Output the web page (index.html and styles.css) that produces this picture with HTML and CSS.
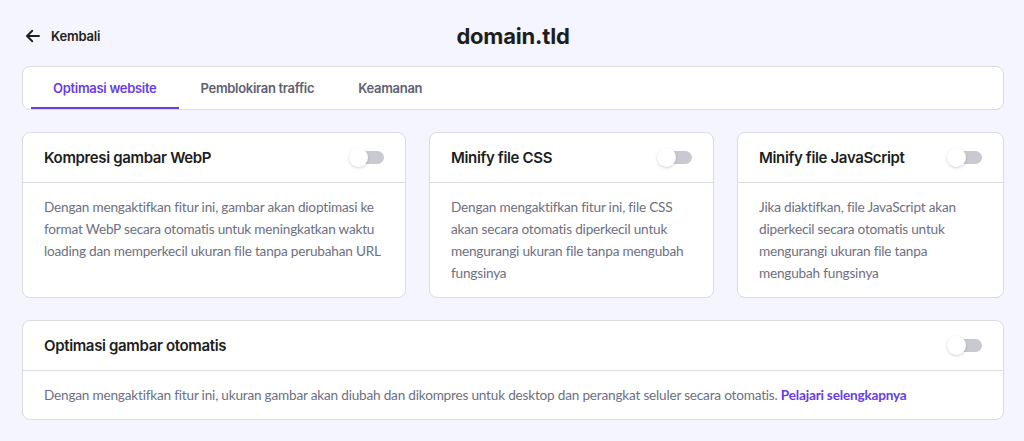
FILE: index.html
```html
<!DOCTYPE html>
<html lang="id">
<head>
<meta charset="utf-8">
<title>domain.tld</title>
<link rel="stylesheet" href="styles.css">
</head>
<body>
<div class="page">
  <header class="topbar">
    <a class="back" href="#">
      <svg class="back-icon" width="18" height="18" viewBox="0 0 24 24" fill="none" stroke="#1d1e20" stroke-width="2.4" stroke-linecap="round" stroke-linejoin="round"><path d="M20 12H4.5"/><path d="M11 5l-7 7 7 7"/></svg>
      <span>Kembali</span>
    </a>
    <h1 class="title">domain.tld</h1>
  </header>

  <nav class="tabs">
    <a class="tab active" href="#">Optimasi website</a>
    <a class="tab" href="#">Pemblokiran traffic</a>
    <a class="tab" href="#">Keamanan</a>
  </nav>

  <section class="grid">
    <div class="card">
      <div class="card-head">
        <h2 class="card-title">Kompresi gambar WebP</h2>
        <span class="toggle"><span class="knob"></span></span>
      </div>
      <p class="card-body">Dengan mengaktifkan fitur ini, gambar akan dioptimasi ke format WebP secara otomatis untuk meningkatkan waktu loading dan memperkecil ukuran file tanpa perubahan URL</p>
    </div>
    <div class="card">
      <div class="card-head">
        <h2 class="card-title">Minify file CSS</h2>
        <span class="toggle"><span class="knob"></span></span>
      </div>
      <p class="card-body">Dengan mengaktifkan fitur ini, file CSS akan secara otomatis diperkecil untuk mengurangi ukuran file tanpa mengubah fungsinya</p>
    </div>
    <div class="card">
      <div class="card-head">
        <h2 class="card-title">Minify file JavaScript</h2>
        <span class="toggle"><span class="knob"></span></span>
      </div>
      <p class="card-body">Jika diaktifkan, file JavaScript akan diperkecil secara otomatis untuk mengurangi ukuran file tanpa mengubah fungsinya</p>
    </div>
  </section>

  <div class="card wide">
    <div class="card-head">
      <h2 class="card-title">Optimasi gambar otomatis</h2>
      <span class="toggle"><span class="knob"></span></span>
    </div>
    <p class="card-body">Dengan mengaktifkan fitur ini, ukuran gambar akan diubah dan dikompres untuk desktop dan perangkat seluler secara otomatis. <a class="link" href="#">Pelajari selengkapnya</a></p>
  </div>
</div>
</body>
</html>
```

FILE: styles.css
```css
* { box-sizing: border-box; }
html, body { margin: 0; padding: 0; }
body {
  background: #f4f5ff;
  font-family: "Inter", "Noto Sans", sans-serif;
  color: #1d1e20;
  width: 1024px;
  height: 441px;
  overflow: hidden;
}
.page {
  padding: 0 20px 0 22px;
}
.topbar {
  display: flex;
  align-items: center;
  height: 66px;
  padding-top: 6px;
}
.back {
  display: flex;
  align-items: center;
  gap: 9px;
  color: #1d1e20;
  text-decoration: none;
  font-size: 13px;
  font-weight: 600;
  letter-spacing: -0.2px;
  width: 200px;
  padding-left: 2px;
}
.title {
  flex: 1;
  text-align: center;
  margin: 0;
  font-size: 22px;
  font-weight: 700;
  letter-spacing: -0.2px;
  padding-right: 200px;
}

.tabs {
  display: flex;
  background: #fff;
  border: 1px solid #dadce0;
  border-radius: 8px;
  height: 44px;
  padding: 0 8px;
}
.tab {
  display: flex;
  align-items: center;
  padding: 2px 22px 0;
  font-size: 13px;
  font-weight: 600;
  letter-spacing: -0.3px;
  color: #5f6172;
  text-decoration: none;
  border-bottom: 2px solid transparent;
}
.tab.active {
  color: #673de6;
  border-bottom-color: #673de6;
}

.grid {
  display: grid;
  grid-template-columns: 384px 285px 267px;
  column-gap: 23px;
  margin-top: 22px;
}
.card {
  background: #fff;
  border: 1px solid #dadce0;
  border-radius: 8px;
}
.card-head {
  display: flex;
  align-items: center;
  justify-content: space-between;
  height: 50px;
  padding: 0 21px;
  border-bottom: 1px solid #dadce0;
}
.card-title {
  margin: 0;
  font-size: 15px;
  font-weight: 600;
  letter-spacing: -0.35px;
  color: #1d1e20;
}
.toggle {
  position: relative;
  width: 34px;
  height: 13px;
  background: #c9cad1;
  border-radius: 7px;
}
.knob {
  position: absolute;
  left: -1px;
  top: -3px;
  width: 19px;
  height: 19px;
  border-radius: 50%;
  background: #fff;
  box-shadow: 0 1px 3px rgba(0,0,0,0.18);
}
.card-body {
  margin: 0;
  padding: 13px 21px;
  font-family: "Lato", "Inter", sans-serif;
  font-size: 13.6px;
  letter-spacing: -0.2px;
  line-height: 22px;
  color: #6d7081;
}
.wide {
  margin-top: 22px;
}
.link {
  color: #673de6;
  font-weight: 700;
  text-decoration: none;
}
```
